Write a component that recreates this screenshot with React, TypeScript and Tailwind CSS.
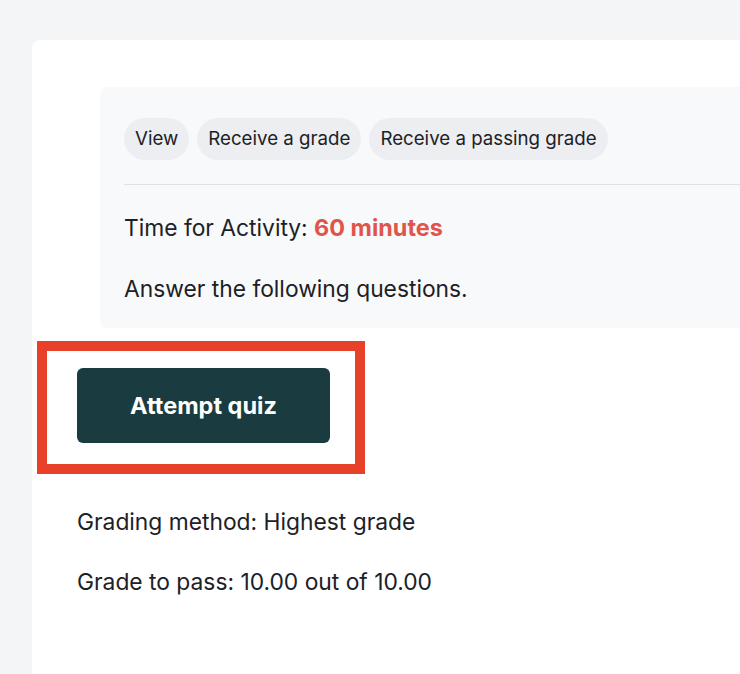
export default function App() {
  const pills = ['View', 'Receive a grade', 'Receive a passing grade']
  return (
    <div
      className="w-[740px] h-[674px] overflow-hidden bg-[#f4f5f7] pl-8 pt-10 text-[#1d2125]"
      style={{ fontFamily: 'Inter, "Noto Sans", sans-serif' }}
    >
      <div className="w-[760px] h-[700px] bg-white rounded-tl-lg pl-[45px] pt-[47px]">
        <div className="ml-[23px] bg-[#f8f9fa] rounded-l-lg pl-6 pt-[31px] pb-[23px]">
          <div className="flex gap-2">
            {pills.map(p => (
              <span key={p} className="h-[42px] px-[11px] flex items-center rounded-full bg-[#eceef1] text-[18.7px]">
                {p}
              </span>
            ))}
          </div>
          <div className="mt-6 border-t border-[#dee2e6]" />
          <p className="mt-[27px] text-[22.8px] leading-[32px]">
            Time for Activity: <span className="font-bold text-[#e0554a] text-[23.4px]">60 minutes</span>
          </p>
          <p className="mt-[29px] text-[22.8px] leading-[32px]">Answer the following questions.</p>
        </div>

        <div className="relative mt-10 w-[253px]">
          <div className="absolute -left-10 -top-[27px] w-[328px] h-[133px] border-[10px] border-[#e8412a]" />
          <button
            type="button"
            className="relative w-[253px] h-[75px] rounded-md bg-[#1a3c40] text-white text-[23.5px] font-bold"
          >
            Attempt quiz
          </button>
        </div>

        <p className="mt-[63px] text-[22.8px] leading-[32px]">Grading method: Highest grade</p>
        <p className="mt-[28px] text-[22.8px] leading-[32px]">Grade to pass: 10.00 out of 10.00</p>
      </div>
    </div>
  )
}
